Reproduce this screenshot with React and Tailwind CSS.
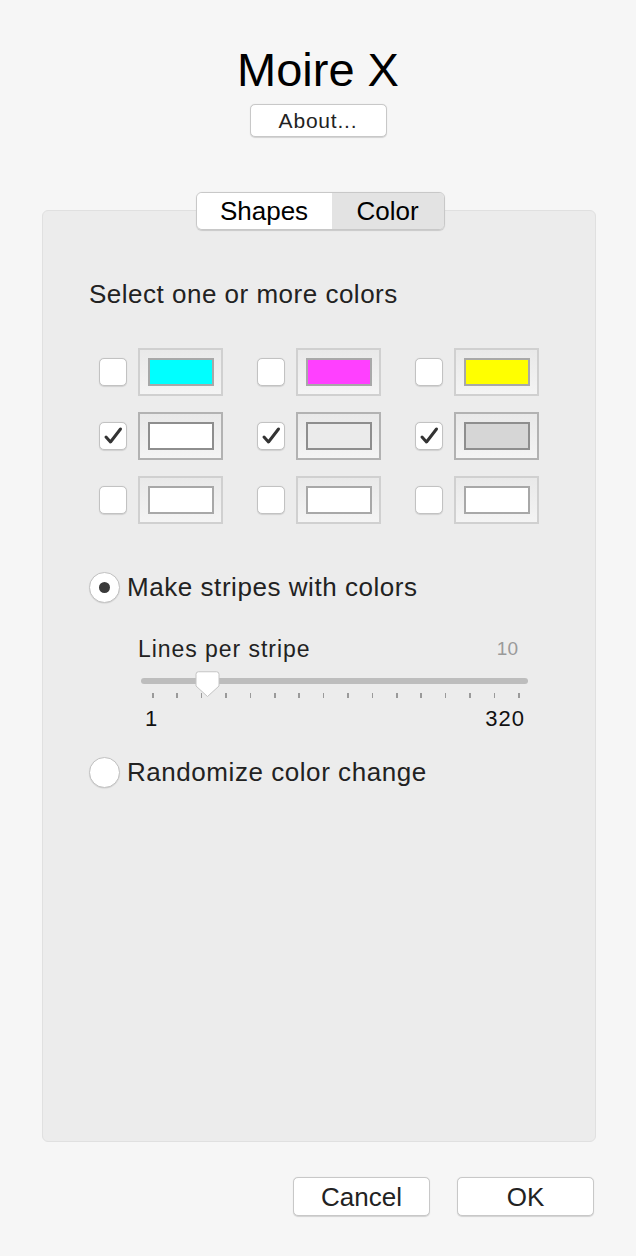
import { useState } from "react";

const SWATCHES = [
  [
    { color: "#00ffff", on: false },
    { color: "#ff40ff", on: false },
    { color: "#ffff00", on: false },
  ],
  [
    { color: "#ffffff", on: true },
    { color: "#ebebeb", on: true },
    { color: "#d6d6d6", on: true },
  ],
  [
    { color: "#ffffff", on: false },
    { color: "#ffffff", on: false },
    { color: "#ffffff", on: false },
  ],
];

const TICKS = Array.from({ length: 16 }, (_, i) => i);

function Checkbox({ checked }) {
  return (
    <div className="flex h-[28px] w-[28px] items-center justify-center rounded-[5px] border border-[#c2c2c2] bg-white shadow-[0_0.5px_1px_rgba(0,0,0,0.12)]">
      {checked && (
        <svg width="22" height="20" viewBox="0 0 22 20">
          <path
            d="M4 11 L8.5 16 L18.5 3"
            fill="none"
            stroke="#333"
            strokeWidth="3"
            strokeLinecap="round"
            strokeLinejoin="round"
          />
        </svg>
      )}
    </div>
  );
}

function Swatch({ color, on }) {
  return (
    <div
      className={`flex h-[48px] w-[85px] items-center justify-center border-2 bg-gradient-to-b from-[#e9e9e9] to-[#f4f4f4] ${
        on ? "border-[#b2b2b2]" : "border-[#d0d0d0]"
      }`}
    >
      <div
        className={`h-[28px] w-[66px] border-2 ${on ? "border-[#8e8e8e]" : "border-[#a8a8a8]"}`}
        style={{ backgroundColor: color }}
      />
    </div>
  );
}

function Radio({ checked, label }) {
  return (
    <div className="flex h-[32px] items-center">
      <div className="flex h-[31px] w-[31px] items-center justify-center rounded-full border border-[#c2c2c2] bg-white shadow-[0_0.5px_1px_rgba(0,0,0,0.12)]">
        {checked && <div className="h-[11px] w-[11px] rounded-full bg-[#3a3a3a]" />}
      </div>
      <span className="ml-[7px] text-[26px] leading-[30px] tracking-[0.55px] text-[#222]">
        {label}
      </span>
    </div>
  );
}

function Slider() {
  return (
    <div className="relative ml-[52px] h-[30px] w-[387px]">
      <div className="absolute left-0 right-0 top-[7px] h-[6px] rounded-full bg-[#bdbdbd]" />
      {TICKS.map((i) => (
        <div
          key={i}
          className="absolute top-[22px] h-[5px] w-[1.5px] bg-[#9a9a9a]"
          style={{ left: 11 + i * 24.4 }}
        />
      ))}
      <svg className="absolute left-[54px] top-0" width="25" height="27" viewBox="0 0 25 27">
        <path
          d="M3.5 0.75 H21.5 Q24 0.75 24 3.25 V15 L12.5 25.5 L1 15 V3.25 Q1 0.75 3.5 0.75 Z"
          fill="#fff"
          stroke="#c4c4c4"
          strokeWidth="1"
        />
      </svg>
    </div>
  );
}

export default function App() {
  const [tab] = useState("Color");
  return (
    <div
      className="flex h-[1256px] w-[636px] flex-col bg-[#f6f6f6] text-black"
      style={{ fontFamily: '"Liberation Sans", Arial, sans-serif' }}
    >
      <div className="pt-[44px] text-center text-[47px] leading-[52px]">Moire X</div>
      <div className="mt-[8px] flex justify-center">
        <button className="h-[33px] w-[137px] rounded-[5px] border border-[#c8c8c8] bg-white text-[21px] tracking-[0.8px] text-[#222] shadow-[0_0.5px_1px_rgba(0,0,0,0.15)]">
          About...
        </button>
      </div>

      <div className="relative z-10 mt-[55px] flex justify-center pl-[4px]">
        <div className="flex h-[38px] w-[249px] overflow-hidden rounded-[6px] border border-[#c8c8c8] shadow-[0_0.5px_1px_rgba(0,0,0,0.15)]">
          <div
            className={`flex w-[135px] items-center justify-center text-[26px] ${
              tab === "Shapes" ? "bg-[#e3e3e3]" : "bg-white"
            }`}
          >
            Shapes
          </div>
          <div
            className={`flex flex-1 items-center justify-center text-[26px] ${
              tab === "Color" ? "bg-[#e3e3e3]" : "bg-white"
            }`}
          >
            Color
          </div>
        </div>
      </div>

      <div className="-mt-[20px] ml-[42px] h-[932px] w-[554px] rounded-[6px] border border-[#e0e0e0] bg-[#ececec] pl-[46px]">
        <div className="mt-[69px] text-[26px] leading-[28px] tracking-[0.5px] text-[#222]">
          Select one or more colors
        </div>

        <div className="ml-[10px] mt-[40px] flex flex-col gap-[16px]">
          {SWATCHES.map((row, r) => (
            <div key={r} className="flex gap-[34px]">
              {row.map((s, c) => (
                <div key={c} className="flex items-center gap-[11px]">
                  <Checkbox checked={s.on} />
                  <Swatch color={s.color} on={s.on} />
                </div>
              ))}
            </div>
          ))}
        </div>

        <div className="mt-[47px]">
          <Radio checked label="Make stripes with colors" />
        </div>

        <div className="ml-[49px] mt-[33px] flex w-[390px] items-center justify-between leading-[26px] text-[#222]">
          <span className="text-[23px] tracking-[0.95px]">Lines per stripe</span>
          <span className="pr-[10px] text-[19px] text-[#9a9a9a]">10</span>
        </div>

        <div className="mt-[9px]">
          <Slider />
        </div>

        <div className="ml-[52px] mt-[5px] flex w-[387px] justify-between text-[22px] leading-[26px] tracking-[1px] text-[#111]">
          <span className="pl-[4px]">1</span>
          <span className="pr-[3px]">320</span>
        </div>

        <div className="mt-[24px]">
          <Radio label="Randomize color change" />
        </div>
      </div>

      <div className="mt-[35px] flex justify-end gap-[27px] pr-[42px]">
        <button className="h-[39px] w-[137px] rounded-[5px] border border-[#c8c8c8] bg-white text-[26px] text-[#222] shadow-[0_0.5px_1px_rgba(0,0,0,0.15)]">
          Cancel
        </button>
        <button className="h-[39px] w-[137px] rounded-[5px] border border-[#c8c8c8] bg-white text-[26px] text-[#222] shadow-[0_0.5px_1px_rgba(0,0,0,0.15)]">
          OK
        </button>
      </div>
    </div>
  );
}
